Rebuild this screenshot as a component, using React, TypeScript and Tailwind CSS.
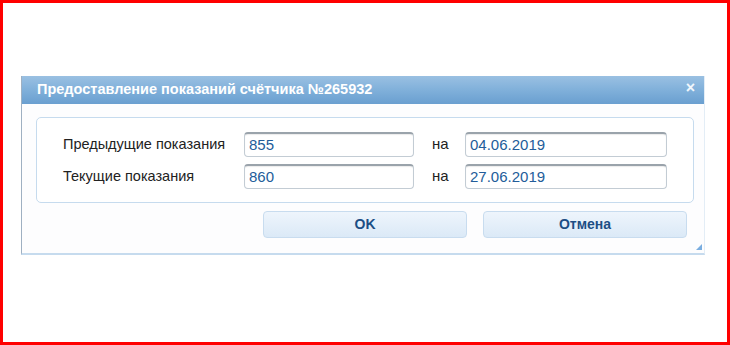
import React from "react";

const font = { fontFamily: '"Liberation Sans", Arial, sans-serif' };

function Field({ value, w }: { value: string; w: string }) {
  return (
    <div
      className={`${w} h-[25px] rounded-[4px] border border-[#c3ccd4] border-t-[2px] border-t-[#9aa3ab] bg-white pl-[4px] flex items-center text-[15px] text-[#235d9a] shadow-[inset_0_1px_1px_rgba(0,0,0,0.08)]`}
    >
      {value}
    </div>
  );
}

function Row({ label, value, date }: { label: string; value: string; date: string }) {
  return (
    <div className="flex items-center">
      <div className="w-[181px] text-[14.5px] text-[#222]">{label}</div>
      <Field value={value} w="w-[170px]" />
      <div className="w-[51px] pl-[18px] text-[15px] text-[#222]">на</div>
      <Field value={date} w="w-[202px]" />
    </div>
  );
}

export default function App() {
  return (
    <div style={font} className="w-[730px] h-[345px] border-[3px] border-[#ff0000] bg-white overflow-hidden">
      <div className="ml-[18px] mt-[73px] w-[684px] flex flex-col border-l border-l-[#9fb0c2] border-r border-r-[#e3edf6] border-b-[2px] border-b-[#c6dbee]">
        <div className="h-[28px] flex items-center justify-between pl-[15px] pr-[9px] bg-gradient-to-b from-[#9ac0e2] via-[#80b0da] to-[#6a9fd0]">
          <span className="text-white font-bold text-[14.5px]">
            Предоставление показаний счётчика №265932
          </span>
          <span className="text-white/90 font-bold text-[16px] leading-none -mt-[5px]">×</span>
        </div>
        <div className="bg-[#fdfdfe] relative">
          <div className="ml-[14px] mr-[10px] mt-[13px] h-[86px] rounded-[5px] border border-[#c6dbee] bg-white pl-[26px] pt-[14px] flex flex-col gap-[7px]">
            <Row label="Предыдущие показания" value="855" date="04.06.2019" />
            <Row label="Текущие показания" value="860" date="27.06.2019" />
          </div>
          <div className="flex justify-end gap-[16px] mr-[17px] mt-[8px] mb-[15px]">
            <button className="w-[204px] h-[27px] rounded-[4px] border border-[#c8dcef] bg-gradient-to-b from-[#eef5fc] to-[#dbe9f7] text-[#1d4e85] font-bold text-[14px]">
              OK
            </button>
            <button className="w-[204px] h-[27px] rounded-[4px] border border-[#c8dcef] bg-gradient-to-b from-[#eef5fc] to-[#dbe9f7] text-[#1d4e85] font-bold text-[14px]">
              Отмена
            </button>
          </div>
          <svg className="absolute right-[2px] bottom-[3px]" width="6" height="6" viewBox="0 0 6 6">
            <path d="M6 0 L6 6 L0 6 Z" fill="#7aaee0" />
          </svg>
        </div>
      </div>
    </div>
  );
}
